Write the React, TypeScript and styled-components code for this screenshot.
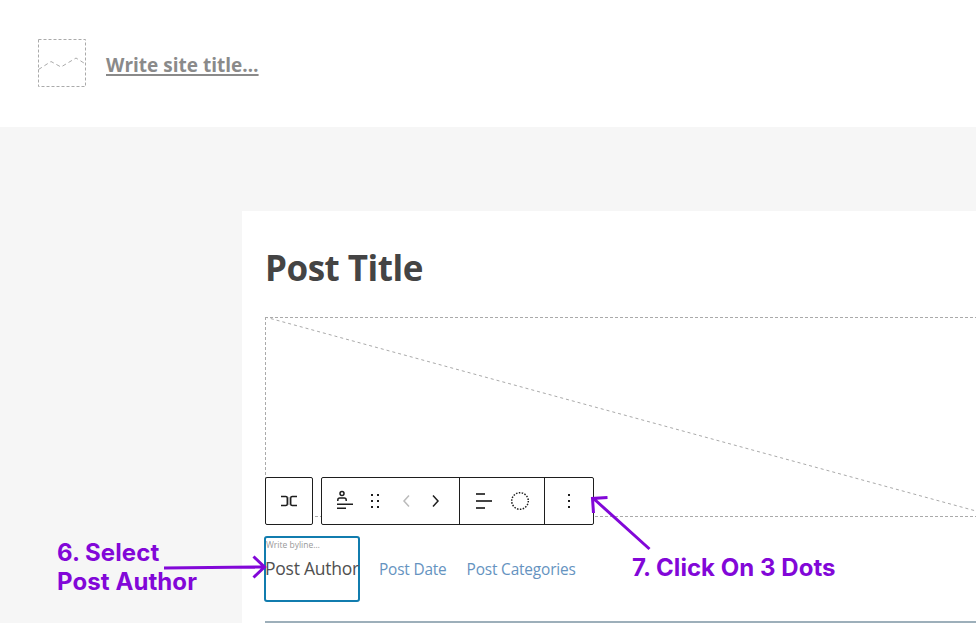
import React from "react";
import styled, { createGlobalStyle } from "styled-components";

const GlobalStyle = createGlobalStyle`
  * { box-sizing: border-box; }
  body { margin: 0; background: #f6f6f6; }
`;

const Page = styled.div`
  position: relative;
  width: 976px;
  height: 623px;
  overflow: hidden;
  display: flex;
  flex-direction: column;
  background: #f6f6f6;
  font-family: "Open Sans", "Noto Sans", sans-serif;
`;

const Header = styled.header`
  flex: none;
  height: 127px;
  padding: 39px 38px 0;
  display: flex;
  gap: 20px;
  background: #fff;
`;

const Logo = styled.svg`
  flex: none;
  width: 48px;
  height: 48px;
`;

const SiteTitle = styled.a`
  margin-top: 12px;
  font-size: 19px;
  line-height: 28px;
  height: 28px;
  font-weight: 700;
  letter-spacing: 0.01px;
  color: #8a8a8a;
  text-decoration: underline;
  text-decoration-thickness: 2px;
  text-underline-offset: 2px;
  text-decoration-skip-ink: none;
  white-space: nowrap;
`;

const Article = styled.main`
  flex: 1;
  display: flex;
  flex-direction: column;
  margin: 84px 0 0 242px;
  padding: 32px 0 0 23px;
  background: #fff;
`;

const PostTitle = styled.h1`
  margin: 0 0 24px;
  height: 50px;
  font-size: 35px;
  line-height: 49px;
  font-weight: 700;
  letter-spacing: -0.5px;
  color: #444;
  white-space: nowrap;
`;

const FeaturedImage = styled.div`
  position: relative;
  flex: none;
  height: 200px;
`;

const Placeholder = styled.svg`
  display: block;
  width: 711px;
  height: 200px;
`;

const Toolbars = styled.div`
  position: absolute;
  left: 0;
  top: 160px;
  display: flex;
  gap: 8px;
`;

const Toolbar = styled.div`
  display: flex;
  height: 48px;
  border: 1px solid #1e1e1e;
  border-radius: 2px;
  background: #fff;
`;

const Group = styled.div<{ $width: number }>`
  width: ${(p) => p.$width}px;
  & + & { border-left: 1px solid #1e1e1e; }
  svg { display: block; }
`;

const Meta = styled.div`
  display: flex;
  align-items: flex-start;
  margin: 19px 0 0 -1px;
`;

const Author = styled.div`
  width: 96px;
  height: 66px;
  border: 2px solid #117cae;
  border-radius: 3px;
  white-space: nowrap;
`;

const Byline = styled.div`
  height: 14px;
  font-size: 8.5px;
  line-height: 14px;
  letter-spacing: 0;
  color: #999;
`;

const AuthorName = styled.div`
  margin: 3px 0 0 -1px;
  font-size: 17.5px;
  line-height: 26px;
  letter-spacing: -0.25px;
  color: #505050;
`;

const MetaLink = styled.a<{ $gap: number; $spacing: number }>`
  margin: 23px 0 0 ${(p) => p.$gap}px;
  font-size: 15.4px;
  line-height: 22px;
  letter-spacing: ${(p) => p.$spacing}px;
  color: #6593bf;
  white-space: nowrap;
`;

const Separator = styled.hr`
  width: 100%;
  height: 2px;
  margin: 19px 0 0;
  border: 0;
  background: #9dafba;
`;

const Annotation = styled.div<{ $x: number; $y: number; $spacing: number }>`
  position: absolute;
  left: ${(p) => p.$x}px;
  top: ${(p) => p.$y}px;
  font: 700 24px/29px Inter, sans-serif;
  letter-spacing: ${(p) => p.$spacing}px;
  color: #8207d8;
  white-space: nowrap;
`;

const Arrows = styled.svg`
  position: absolute;
  inset: 0;
  pointer-events: none;
`;

export default function App() {
  return (
    <Page>
      <GlobalStyle />
      <Header>
        <Logo viewBox="0 0 48 48" fill="none" stroke="#aaa" strokeDasharray="3 2">
          <path d="M.5.5h47v47H.5z" />
          <path d="M.5 30.5 13 22.5l10 5.5 15-9 9.5 6" strokeDasharray="4 3" />
        </Logo>
        <SiteTitle>Write site title…</SiteTitle>
      </Header>
      <Article>
        <PostTitle>Post Title</PostTitle>
        <FeaturedImage>
          <Placeholder viewBox="0 0 711 200" fill="none" stroke="#aaa" strokeDasharray="3 2">
            <path d="M0 .5H711M.5 0V200M0 199.5H711" />
            <path d="M0 0 733 200" strokeDasharray="3 3" />
          </Placeholder>
          <Toolbars>
            <Toolbar>
              <Group $width={46}>
                <svg width="46" height="46" fill="none" stroke="#1e1e1e" strokeWidth="1.5">
                  <path d="M22.9 19v8" stroke="#bbb" strokeWidth="2" />
                  <path d="M15 18.5h4.8q1.5 0 1.5 1.5v6q0 1.5-1.5 1.5H15M31 18.5h-4.8q-1.5 0-1.5 1.5v6q0 1.5 1.5 1.5H31" />
                </svg>
              </Group>
            </Toolbar>
            <Toolbar>
              <Group $width={137}>
                <svg width="137" height="46" fill="none" stroke="#1e1e1e" strokeWidth="1.5">
                  <circle cx="20" cy="15.5" r="2" />
                  <path d="M15.8 23v-1q0-2 2-2h4.4q2 0 2 2v1M15 26.3h16M15 30.2h9" />
                  <path
                    stroke="none"
                    fill="#1e1e1e"
                    d="M49 16h2v2h-2zM55 16h2v2h-2zM49 22h2v2h-2zM55 22h2v2h-2zM49 28h2v2h-2zM55 28h2v2h-2z"
                  />
                  <path stroke="#bbb" d="m87 17.5-5 5.5 5 5.5" />
                  <path d="m111 17.5 5 5.5-5 5.5" />
                </svg>
              </Group>
              <Group $width={85}>
                <svg width="84" height="46" fill="none" stroke="#1e1e1e" strokeWidth="1.5">
                  <path d="M16 16h9M16 23h16M16 30h9" stroke="#444" strokeWidth="2" />
                  <circle cx="60" cy="23" r="8.3" strokeDasharray="1.5 1.397" />
                </svg>
              </Group>
              <Group $width={49}>
                <svg width="48" height="46" fill="#1e1e1e">
                  <path d="M23 16h2v2h-2zM23 22h2v2h-2zM23 28h2v2h-2z" />
                </svg>
              </Group>
            </Toolbar>
          </Toolbars>
        </FeaturedImage>
        <Meta>
          <Author>
            <Byline>Write byline…</Byline>
            <AuthorName>Post Author</AuthorName>
          </Author>
          <MetaLink $gap={19} $spacing={-0.18}>Post Date</MetaLink>
          <MetaLink $gap={20} $spacing={-0.16}>Post Categories</MetaLink>
        </Meta>
        <Separator />
      </Article>
      <Annotation $x={57} $y={538} $spacing={0.08}>
        6. Select
        <br />
        Post Author
      </Annotation>
      <Annotation $x={632} $y={553} $spacing={0.04}>7. Click On 3 Dots</Annotation>
      <Arrows width="976" height="623" fill="none" stroke="#8207d8" strokeWidth="3">
        <path d="M164 568 264 567M253.5 556.5 264.5 567 253.5 577.5" />
        <path d="M649.5 549 593.5 498.5M607.5 497.5 592.5 498.5 593.5 513" />
      </Arrows>
    </Page>
  );
}
